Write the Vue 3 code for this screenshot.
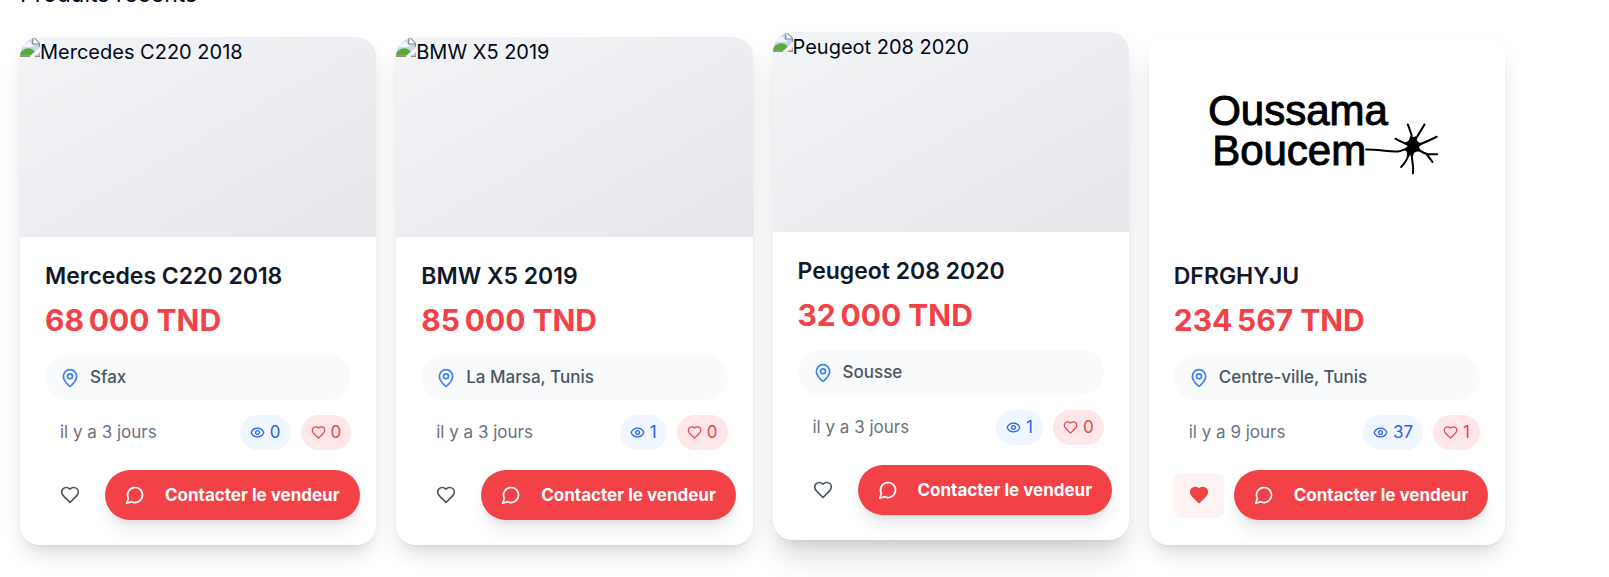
<script setup>
const products = [
  { title: 'Mercedes C220 2018', price: '68\u202f000\u00a0TND', place: 'Sfax', age: 'il y a 3 jours', views: 0, likes: 0 },
  { title: 'BMW X5 2019', price: '85\u202f000\u00a0TND', place: 'La Marsa, Tunis', age: 'il y a 3 jours', views: 1, likes: 0 },
  { title: 'Peugeot 208 2020', price: '32\u202f000\u00a0TND', place: 'Sousse', age: 'il y a 3 jours', views: 1, likes: 0, raised: true },
  { title: 'DFRGHYJU', price: '234\u202f567\u00a0TND', place: 'Centre-ville, Tunis', age: 'il y a 9 jours', views: 37, likes: 1, logo: true, liked: true },
]
const heart = 'M19 14c1.49-1.46 3-3.21 3-5.5A5.5 5.5 0 0 0 16.5 3c-1.76 0-3 .5-4.5 2-1.5-1.5-2.74-2-4.5-2A5.5 5.5 0 0 0 2 8.5c0 2.3 1.5 4.05 3 5.5l7 7Z'
</script>

<template>
  <main class="page">
    <h2 class="heading">Produits récents</h2>
    <div class="grid">
      <article v-for="p in products" :key="p.title" class="card" :class="{ raised: p.raised }">
        <div class="media" :class="{ plain: p.logo }">
          <svg v-if="p.logo" class="logo" viewBox="0 0 356 200" role="img" aria-label="Oussama Boucem">
            <text x="59" y="88">Oussama</text>
            <text x="63" y="128">Boucem</text>
            <g fill="none" stroke="#000" stroke-width="2" stroke-linecap="round">
              <path d="M217 112.6C228 112.4 238 114.6 249 114.5C253 114 256 112 261 110" />
              <path d="M258.7 87.5C261 93 263 97 263.7 106" />
              <path d="M275.3 87.5C272 94 268 98 265 106" />
              <path d="M287.7 99.7C281 103 275 106 266 109" />
              <path d="M266 111C271 113 274 117 279 117.2L288 117.2M276 116C279 118.500 281 122 283.300 125" />
              <path d="M262 112C261.500 120 265 126 263.800 136.300" />
              <path d="M252 130C256 126 259 121 262 112" />
              <path d="M246.300 101.700C252 105 257 107 262 109" />
            </g>
            <path d="M261 99q3 2 6 0q-.5 4 3 6.500l4 1l-4 3q0 3 4 6q-6-2-9 .5l-2 5l-2-4l-4 3q2-3 0-6l-4-1.500q5-1 5.500-4l-3.500-3q5 .5 6-6.500Z" />
          </svg>
          <template v-else>
            <svg class="broken" viewBox="0 0 16 16" aria-hidden="true">
              <path d="M0 0H11L16 5V16H0Z" fill="#c6d7f6" />
              <path d="M2 8Q2 5 5 5Q7 2 9 5Q11 5 11 8Z" fill="#f1f5fd" />
              <path d="M0 15V13Q3 9 7 9Q11 9 14 15Z" fill="#57ad35" />
              <path d="M16 8L7 16H12L16 12Z" fill="#f4f5f8" />
              <path d="M0 15.500H8M12 15.500H16V12.500M15.500 8V5L11 .5H10V5.500H15" fill="none" stroke="#8e8e8e" />
              <path d="M11 1V5H15Z" fill="#fff" />
            </svg>
            <span>{{ p.title }}</span>
          </template>
        </div>
        <div class="body">
          <h3 class="title">{{ p.title }}</h3>
          <p class="price">{{ p.price }}</p>
          <p class="place">
            <svg class="icon pin" viewBox="0 0 24 24" aria-hidden="true">
              <path d="M20 10c0 4.993-5.539 10.193-7.399 11.799a1 1 0 0 1-1.202 0C9.539 20.193 4 14.993 4 10a8 8 0 0 1 16 0" />
              <circle cx="12" cy="10" r="3" />
            </svg>
            <span>{{ p.place }}</span>
          </p>
          <div class="meta">
            <span class="age">{{ p.age }}</span>
            <span class="badge views">
              <svg class="icon small" viewBox="0 0 24 24" aria-hidden="true">
                <path d="M2.062 12.348a1 1 0 0 1 0-.696 10.750 10.750 0 0 1 19.876 0 1 1 0 0 1 0 .696 10.750 10.750 0 0 1-19.876 0" />
                <circle cx="12" cy="12" r="3" />
              </svg>
              <span>{{ p.views }}</span>
            </span>
            <span class="badge likes">
              <svg class="icon small" viewBox="0 0 24 24" aria-hidden="true"><path :d="heart" /></svg>
              <span>{{ p.likes }}</span>
            </span>
          </div>
          <div class="actions">
            <button type="button" class="fav" :class="{ on: p.liked }" aria-label="Ajouter aux favoris">
              <svg class="icon" viewBox="0 0 24 24" aria-hidden="true"><path :d="heart" /></svg>
            </button>
            <button type="button" class="contact">
              <svg class="icon" viewBox="0 0 24 24" aria-hidden="true"><path d="M7.900 20A9 9 0 1 0 4 16.100L2 22Z" /></svg>
              <span>Contacter le vendeur</span>
            </button>
          </div>
        </div>
      </article>
    </div>
  </main>
</template>

<style>
body {
  background: #fff;
  overflow: hidden;
}
</style>

<style scoped>
.page {
  max-width: 1485px;
  margin-top: -23px;
  padding: 0 20px 40px;
  color: #020817;
  font-family: Inter, "Liberation Sans", sans-serif;
  font-size: 20px;
  line-height: 30px;
}
.heading {
  margin: 0 0 25px;
  font-size: 23px;
  font-weight: 400;
  line-height: 35px;
}
.grid {
  display: grid;
  grid-template-columns: repeat(4, minmax(0, 1fr));
  gap: 20px;
}
.card {
  overflow: hidden;
  border-radius: 20px;
  background: #fff;
  box-shadow: 0 12px 19px -4px rgba(0, 0, 0, 0.1), 0 5px 8px -5px rgba(0, 0, 0, 0.1), 0 10px 30px rgba(0, 0, 0, 0.04);
}
.raised {
  transform: translateY(-5px);
  box-shadow: 0 25px 31px -6px rgba(0, 0, 0, 0.1), 0 10px 12px -7px rgba(0, 0, 0, 0.1), 0 10px 30px rgba(0, 0, 0, 0.05);
}
.media {
  display: flex;
  align-items: flex-start;
  height: 200px;
  background: linear-gradient(to bottom right, #f3f4f6, #e5e7eb);
}
.plain {
  background: #fff;
}
.logo {
  width: 100%;
  height: 100%;
}
.logo text {
  fill: #000;
  stroke: #000;
  stroke-width: 1;
  font-family: "Liberation Sans", Arial, sans-serif;
  font-size: 42px;
}
.broken {
  flex: none;
  width: 20px;
  height: 20px;
}
.body {
  padding: 25px;
}
.title {
  margin: 0 0 10px;
  color: #111827;
  font-size: 23px;
  font-weight: 600;
  line-height: 28px;
}
.price {
  margin: 0 0 15px;
  color: #f24147;
  font-size: 30px;
  font-weight: 700;
  line-height: 40px;
}
.place {
  display: flex;
  align-items: center;
  gap: 10px;
  margin: 0 0 15px;
  padding: 10px 15px;
  border-radius: 23px;
  background: #f9fafb;
  color: #4b5563;
  font-size: 17px;
  font-weight: 500;
  line-height: 25px;
}
.icon {
  flex: none;
  width: 20px;
  height: 20px;
  fill: none;
  stroke: currentColor;
  stroke-width: 2;
  stroke-linecap: round;
  stroke-linejoin: round;
}
.pin {
  color: #3b82f6;
}
.small {
  width: 15px;
  height: 15px;
}
.meta {
  display: flex;
  align-items: center;
  gap: 10px;
  margin-bottom: 20px;
  padding-left: 15px;
  color: #6b7280;
  font-size: 17px;
  line-height: 25px;
}
.age {
  flex: 1;
}
.badge {
  display: flex;
  align-items: center;
  gap: 5px;
  padding: 5px 10px;
  border-radius: 18px;
}
.views {
  background: #eff6ff;
  color: #2563eb;
}
.likes {
  background: #fde7e8;
  color: #f24147;
}
.actions {
  display: flex;
  align-items: center;
  gap: 10px;
}
.fav {
  display: flex;
  flex: none;
  align-items: center;
  justify-content: center;
  width: 50px;
  height: 45px;
  padding: 0;
  border: 0;
  border-radius: 8px;
  background: transparent;
  color: #4b5563;
}
.on {
  background: #fef2f2;
  color: #ef4444;
}
.on .icon {
  fill: currentColor;
}
.contact {
  display: flex;
  flex: none;
  align-items: center;
  gap: 20px;
  height: 50px;
  padding: 0 20px;
  border: 0;
  border-radius: 25px;
  background: #f24147;
  box-shadow: 0 12px 19px -4px rgba(0, 0, 0, 0.1), 0 5px 8px -5px rgba(0, 0, 0, 0.1);
  color: #fff;
  font-family: inherit;
  font-size: 17px;
  font-weight: 700;
  line-height: 25px;
  white-space: nowrap;
}
</style>
